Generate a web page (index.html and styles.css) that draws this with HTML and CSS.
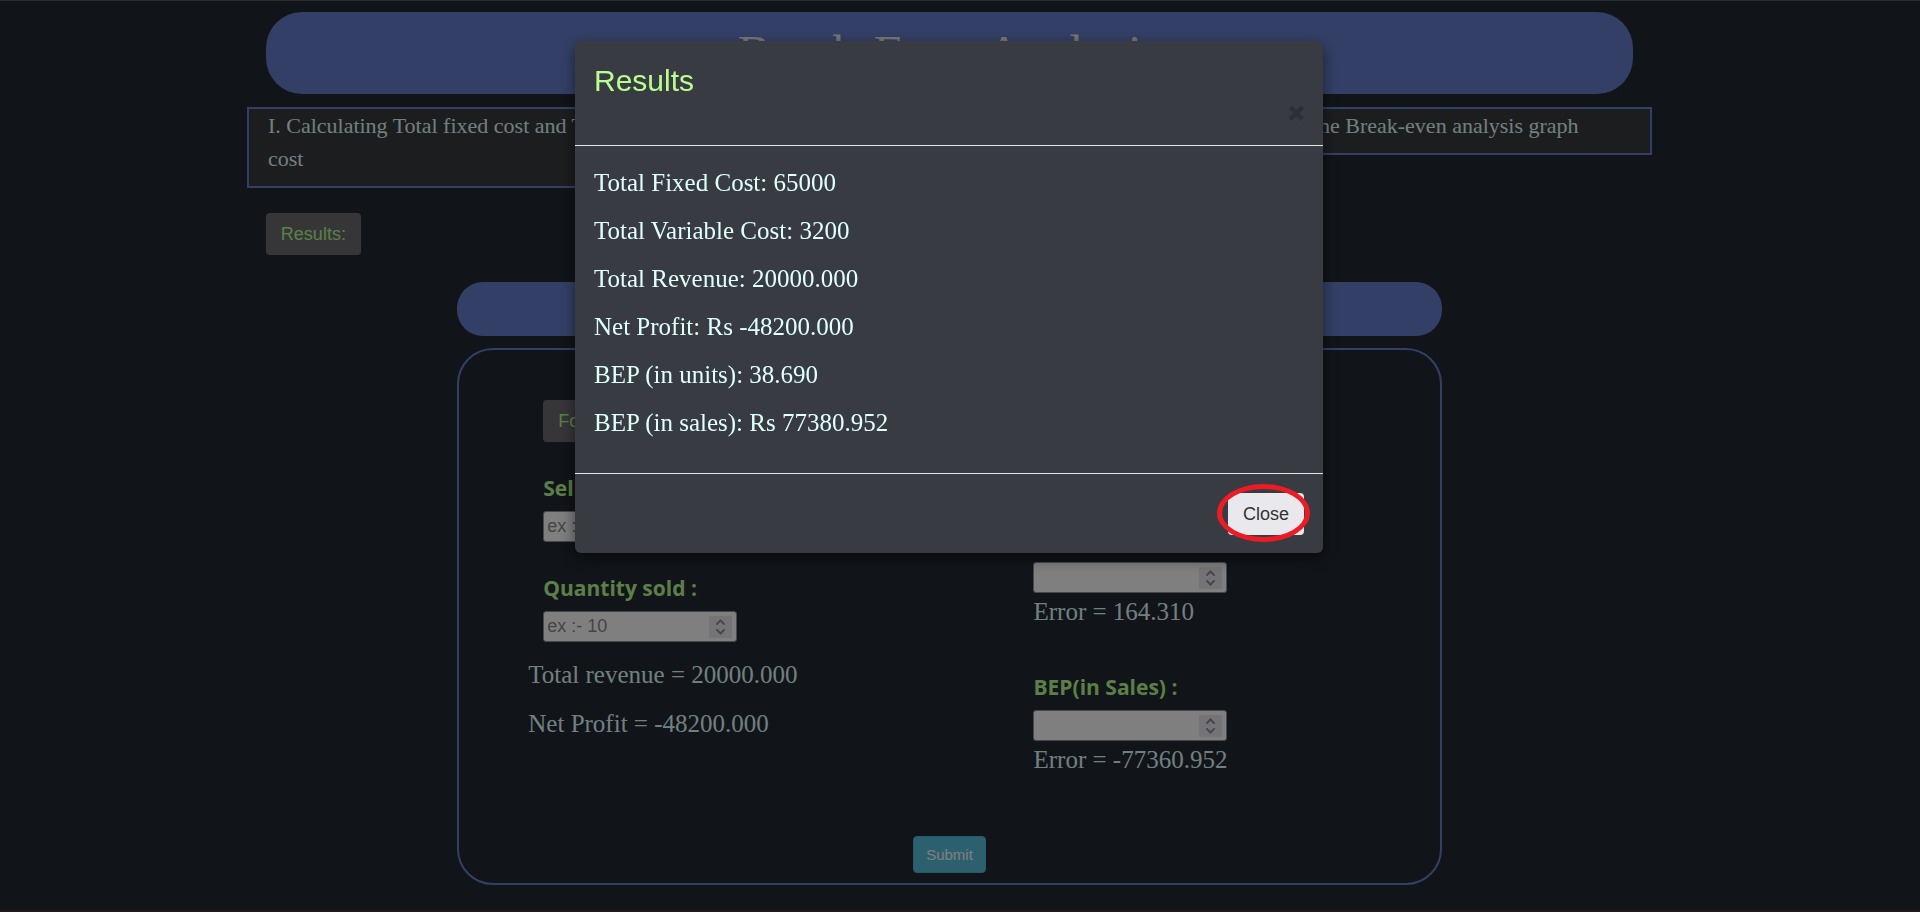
FILE: index.html
```html
<!DOCTYPE html>
<html lang="en">
<head>
  <meta charset="utf-8">
  <meta name="viewport" content="width=device-width, initial-scale=1">
  <title>Break-Even Analysis</title>
  <link rel="stylesheet" href="styles.css">
</head>
<body>
  <main class="page">
    <header class="banner"><h1 class="banner-title">Break-Even Analysis</h1></header>

    <nav class="steps">
      <div class="step">I. Calculating Total fixed cost and Total variable cost</div>
      <div class="step"></div>
      <div class="step">III. Plotting the Break-even analysis graph</div>
    </nav>

    <div class="content">
      <button class="btn btn-muted" type="button">Results:</button>

      <div class="panel">
        <div class="panel-heading"></div>
        <form class="card">
          <div class="columns">
            <div class="column">
              <div class="fields">
                <button class="btn btn-muted" type="button">Formula</button>
                <div class="field">
                  <label for="price">Selling price :</label>
                  <input id="price" type="number" placeholder="ex :- 100">
                </div>
                <div class="field">
                  <label for="quantity">Quantity sold :</label>
                  <input id="quantity" type="number" placeholder="ex :- 10">
                </div>
              </div>
              <div class="totals">
                <p>Total revenue = 20000.000</p>
                <p>Net Profit = -48200.000</p>
              </div>
            </div>
            <div class="column column-bep">
              <div class="field">
                <label for="bep-units">BEP(in Units) :</label>
                <input id="bep-units" type="number">
                <p class="error">Error = 164.310</p>
              </div>
              <div class="field">
                <label for="bep-sales">BEP(in Sales) :</label>
                <input id="bep-sales" type="number">
                <p class="error">Error = -77360.952</p>
              </div>
            </div>
          </div>
          <button class="submit" type="submit">Submit</button>
        </form>
      </div>
    </div>
  </main>

  <div class="backdrop">
    <section class="modal" role="dialog" aria-labelledby="modal-title">
      <div class="modal-header">
        <h2 class="modal-title" id="modal-title">Results</h2>
        <button class="dismiss" type="button" aria-label="Dismiss">×</button>
      </div>
      <div class="modal-body">
        <p>Total Fixed Cost: 65000</p>
        <p>Total Variable Cost: 3200</p>
        <p>Total Revenue: 20000.000</p>
        <p>Net Profit: Rs -48200.000</p>
        <p>BEP (in units): 38.690</p>
        <p>BEP (in sales): Rs 77380.952</p>
      </div>
      <div class="modal-footer">
        <button class="btn btn-close" type="button">Close</button>
      </div>
    </section>
  </div>
</body>
</html>
```
FILE: styles.css
```css
* {
  box-sizing: border-box;
}

body {
  margin: 0;
  min-height: 100vh;
  border-top: 1px solid #5a585e;
  border-bottom: 2px solid #40363a;
  background: #222831;
  color: #e0ffff;
  font-family: "Liberation Serif", "Times New Roman", serif;
  font-size: 25px;
  line-height: 34px;
}

p,
h1,
h2 {
  margin: 0;
  font-weight: normal;
}

.page {
  margin-right: 21px;
  padding-top: 11px;
}

.banner {
  width: 72%;
  margin: 0 auto 13px;
  padding: 5px 0;
  border-radius: 36px;
  background: #677fcd;
  text-align: center;
}

.banner-title {
  color: #eeeeee;
  font-size: 50px;
  line-height: 72px;
}

.steps {
  display: grid;
  grid-template-columns: repeat(3, 1fr);
  align-items: start;
  width: 74%;
  margin: 0 auto 25px;
}

.step {
  min-height: 48px;
  padding: 0 10px 11px 19px;
  border: 2px solid #677fcd;
  background: #393b3f;
  font-size: 22px;
  line-height: 33px;
}

.content {
  width: 72%;
  margin: 0 auto;
}

.btn {
  display: block;
  padding: 8px 15px;
  border: 0;
  border-radius: 4px;
  font-family: "Liberation Sans", Arial, sans-serif;
  font-size: 18px;
  line-height: 26px;
}

.btn-muted {
  background: #6d6d73;
  color: #b9fd90;
}

.panel {
  width: 72%;
  margin: 27px auto 0;
}

.panel-heading {
  height: 54px;
  margin-bottom: 12px;
  border-radius: 26px;
  background: #677fcd;
}

.card {
  padding: 50px 0 10px;
  border: 2px solid #677fcd;
  border-radius: 36px;
}

.columns {
  display: grid;
  grid-template-columns: 1fr 1fr;
  margin-bottom: 59px;
}

.column {
  padding-left: 69px;
}

.column-bep {
  display: flex;
  flex-direction: column;
  gap: 43px;
  padding: 124px 0 0 84px;
}

.fields {
  display: flex;
  flex-direction: column;
  align-items: flex-start;
  gap: 31px;
  margin: 0 0 16px 15px;
}

.field label {
  display: block;
  margin-bottom: 8px;
  color: #b9fd90;
  font-family: "Trebuchet MS", "Open Sans", sans-serif;
  font-size: 21px;
  font-weight: bold;
  line-height: 30px;
}

.field input {
  display: block;
  width: 194px;
  height: 31px;
  padding: 2px 4px 2px 3px;
  border: 1px solid #8f8f9d;
  border-radius: 3px;
  background: #ffffff;
  color: #222222;
  font-family: "Liberation Sans", Arial, sans-serif;
  font-size: 18px;
}

.field input::placeholder {
  color: #8a8a8e;
}

.field input::-webkit-inner-spin-button {
  appearance: none;
  width: 23px;
  height: 22px;
  opacity: 1;
  background: #e9e9ed url("data:image/svg+xml,%3Csvg xmlns='http://www.w3.org/2000/svg' width='23' height='22' fill='none' stroke='%238f8f9d' stroke-width='2' stroke-linecap='round'%3E%3Cpath d='M8 8l3.5-3.5L15 8M8 14l3.5 3.5L15 14'/%3E%3C/svg%3E");
}

.error {
  margin-top: 2px;
}

.totals {
  display: flex;
  flex-direction: column;
  gap: 15px;
}

.submit {
  display: block;
  margin: 0 auto;
  padding: 7px 12px;
  border: 1px solid #46b8da;
  border-radius: 4px;
  background: #5bc0de;
  color: #ffffff;
  font-family: "Liberation Sans", Arial, sans-serif;
  font-size: 15px;
  line-height: 21px;
}

.backdrop {
  position: fixed;
  inset: 0;
  display: flex;
  align-items: flex-start;
  justify-content: center;
  padding: 41px 22px 0 0;
  background: rgba(0, 0, 0, 0.5);
}

.modal {
  width: 100%;
  max-width: 748px;
  border-radius: 6px;
  background: #393b43;
  box-shadow: 0 5px 15px rgba(0, 0, 0, 0.5);
}

.modal-header {
  display: flex;
  flex-direction: column;
  padding: 20px 19px;
  border-bottom: 1px solid #e5e5e5;
}

.modal-title {
  color: #b9fd90;
  font-family: "Liberation Sans", Arial, sans-serif;
  font-size: 30px;
  line-height: 40px;
}

.dismiss {
  align-self: flex-end;
  padding: 0;
  border: 0;
  background: none;
  color: #000000;
  font-family: "Liberation Sans", Arial, sans-serif;
  font-size: 26px;
  font-weight: bold;
  line-height: 24px;
  text-shadow: 0 1px 0 #ffffff;
  -webkit-text-stroke: 2px #000000;
  opacity: 0.2;
}

.modal-body {
  display: flex;
  flex-direction: column;
  gap: 14px;
  padding: 20px 19px 33px;
}

.modal-footer {
  display: flex;
  justify-content: flex-end;
  padding: 19px 19px 18px;
  border-top: 1px solid #e5e5e5;
}

.btn-close {
  position: relative;
  background: #e9e9ed;
  color: #333333;
}

/* Ring that marks the button */
.btn-close::after {
  content: "";
  position: absolute;
  inset: -9px -6px -7px -11px;
  border: 5px solid #ed1c24;
  border-radius: 50%;
}
```
